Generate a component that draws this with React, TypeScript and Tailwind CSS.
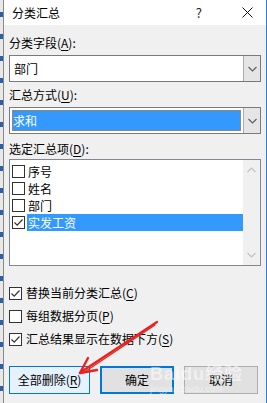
import React from 'react';

const fontCls = "font-['Noto_Sans_CJK_SC','Noto_Sans',sans-serif]";

// small check mark used by the checkboxes
const Tick = () => (
  <svg width="11" height="11" viewBox="0 0 11 11" className="block">
    <path d="M1.5 5.5 L4.2 8.2 L9.5 2.5" fill="none" stroke="#333" strokeWidth="1.2" />
  </svg>
);

const Box: React.FC<{ checked?: boolean }> = ({ checked }) => (
  <div className="w-[13px] h-[13px] shrink-0 border border-[#333] bg-white flex items-center justify-center">
    {checked && <Tick />}
  </div>
);

const Chevron: React.FC<{ up?: boolean; color?: string }> = ({ up, color = '#606060' }) => (
  <svg width="9" height="6" viewBox="0 0 9 6" className="block">
    <path
      d={up ? 'M0.5 5 L4.5 1 L8.5 5' : 'M0.5 1 L4.5 5 L8.5 1'}
      fill="none"
      stroke={color}
      strokeWidth="1.2"
    />
  </svg>
);

const Key: React.FC<{ k: string }> = ({ k }) => <span className="underline underline-offset-2">{k}</span>;

const Combo: React.FC<{ value: string; active?: boolean }> = ({ value, active }) => (
  <div className="flex h-[27px] border border-[#7a7a7a] bg-white">
    <div className="flex-1 p-[2px]">
      {active ? (
        <div className="h-full bg-[#3399ff] text-white outline-1 outline-dotted outline-[#e07b00] -outline-offset-1 flex items-center pl-[1px] text-[12px]">
          {value}
        </div>
      ) : (
        <div className="h-full flex items-center pl-[2px] text-[12px] text-black">{value}</div>
      )}
    </div>
    <div className="w-[17px] border-l border-[#adadad] bg-[#e5e5e5] flex items-center justify-center">
      <Chevron />
    </div>
  </div>
);

const items = [
  { name: '序号', checked: false },
  { name: '姓名', checked: false },
  { name: '部门', checked: false },
  { name: '实发工资', checked: true },
];

const options = [
  { label: '替换当前分类汇总', k: 'C', checked: true },
  { label: '每组数据分页', k: 'P', checked: false },
  { label: '汇总结果显示在数据下方', k: 'S', checked: true },
];

export default function App() {
  return (
    <div className={`relative w-[267px] h-[403px] overflow-hidden flex bg-white text-[12px] text-black ${fontCls}`}>
      {/* sheet behind the dialog */}
      <div className="w-[3px] bg-[repeating-linear-gradient(to_bottom,#e8e8e8_0px,#e8e8e8_12px,#2b5fa8_12px,#2b5fa8_17px,#e8e8e8_17px,#e8e8e8_22px)]" />

      <div className="flex-1 flex flex-col border-l border-[#8a8a8a] border-r border-r-[#2b7fd4] bg-[#f0f0f0]">
        {/* title bar */}
        <div className="h-[25px] bg-white flex items-center pl-[8px] pr-[10px] shrink-0">
          <span className="text-[12px]">分类汇总</span>
          <span className="ml-auto mr-[40px] text-[13px] text-[#222]">?</span>
          <svg width="11" height="11" viewBox="0 0 11 11" className="mr-[3px]">
            <path d="M0.5 0.5 L10.5 10.5 M10.5 0.5 L0.5 10.5" stroke="#111" strokeWidth="1" />
          </svg>
        </div>

        <div className="flex flex-col pl-[5px] pr-[5px]">
          <div className="mt-[11px] h-[14px] leading-[14px]">
            分类字段(<Key k="A" />):
          </div>
          <div className="mt-[5px]">
            <Combo value="部门" />
          </div>

          <div className="mt-[6px] h-[14px] leading-[14px]">
            汇总方式(<Key k="U" />):
          </div>
          <div className="mt-[5px]">
            <Combo value="求和" active />
          </div>

          <div className="mt-[8px] h-[14px] leading-[14px]">
            选定汇总项(<Key k="D" />):
          </div>
          <div className="mt-[3px] h-[107px] border border-[#828790] bg-white flex">
            <div className="flex-1 flex flex-col pt-[3px] pl-[2px]">
              {items.map((it) => (
                <div key={it.name} className="h-[17px] flex items-center">
                  <Box checked={it.checked} />
                  <span
                    className={
                      it.checked
                        ? 'ml-[2px] flex-1 h-[17px] leading-[17px] bg-[#3399ff] text-white pl-[1px] text-[12px]'
                        : 'ml-[3px] leading-[16px] text-[12px]'
                    }
                  >
                    {it.name}
                  </span>
                </div>
              ))}
            </div>
            <div className="w-[17px] bg-[#f0f0f0] flex flex-col items-center justify-between py-[7px]">
              <Chevron up color="#c2c2c2" />
              <Chevron color="#c2c2c2" />
            </div>
          </div>

          <div className="mt-[20px] flex flex-col gap-[9px]">
            {options.map((o) => (
              <div key={o.k} className="h-[14px] flex items-center">
                <Box checked={o.checked} />
                <span className="ml-[4px] text-[12px]">
                  {o.label}(<Key k={o.k} />)
                </span>
              </div>
            ))}
          </div>

          <div className="mt-[20px] flex gap-[10px]">
            <div className="w-[81px] h-[28px] border border-[#0078d7] bg-[#e5f1fb] flex items-center justify-center">
              全部删除(<Key k="R" />)
            </div>
            <div className="w-[74px] h-[28px] border-2 border-[#0078d7] bg-[#e1e1e1] flex items-center justify-center">
              确定
            </div>
            <div className="w-[74px] h-[28px] border border-[#adadad] bg-[#e1e1e1] flex items-center justify-center">
              取消
            </div>
          </div>
        </div>
      </div>

      {/* watermark */}
      <div className="absolute left-[150px] top-[362px] text-white/50 font-['Liberation_Sans',sans-serif] pointer-events-none">
        <div className="text-[18px] font-bold leading-[20px] tracking-[1px]">Baidu<span className={fontCls}>经验</span></div>
        <div className="text-[9px] leading-[10px] text-white/50">jingyan.baidu.com</div>
      </div>

      {/* red arrow annotation */}
      <svg className="absolute left-0 top-0 pointer-events-none" width="267" height="403">
        <g stroke="#e8231f" strokeLinecap="round" fill="none">
          <path d="M157 322 L81 372" strokeWidth="2.2" />
          <path d="M155 325 L83 373" strokeWidth="1.2" />
          <path d="M80 373 L88 358" strokeWidth="2.4" />
          <path d="M80 373 L97 370" strokeWidth="2.4" />
        </g>
      </svg>
    </div>
  );
}
